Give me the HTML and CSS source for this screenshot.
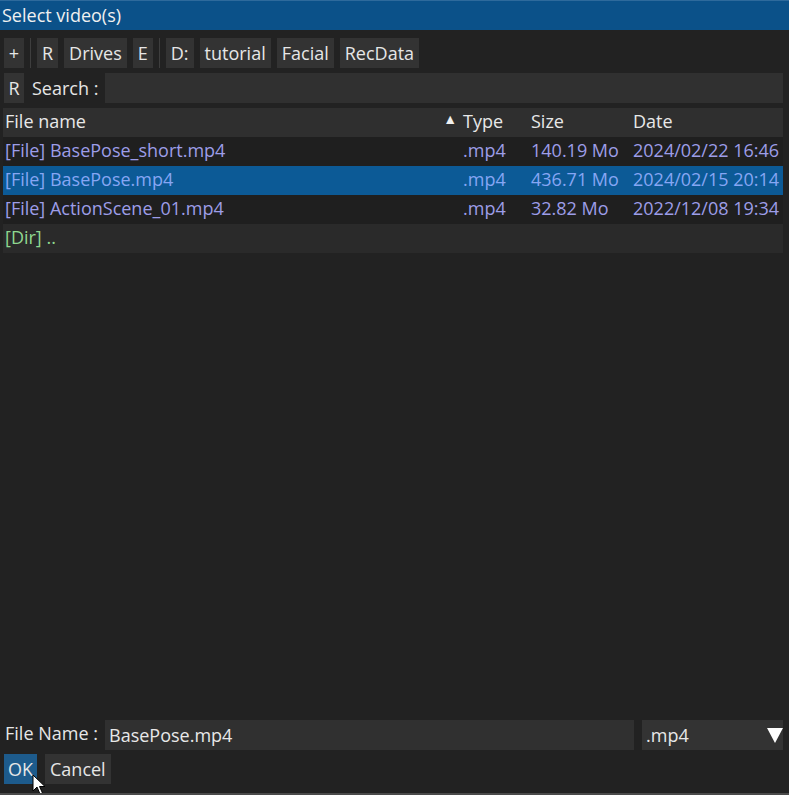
FILE: index.html
```html
<!DOCTYPE html>
<html>
<head>
<meta charset="utf-8">
<link rel="stylesheet" href="styles.css">
</head>
<body>
<div class="dialog">
  <div class="titlebar">Select video(s)</div>
  <div class="content">
    <div class="toolbar">
      <span class="btn">+</span>
      <span class="sep"></span>
      <span class="btn">R</span>
      <span class="btn">Drives</span>
      <span class="btn">E</span>
      <span class="sep"></span>
      <span class="btn">D:</span>
      <span class="btn">tutorial</span>
      <span class="btn">Facial</span>
      <span class="btn">RecData</span>
    </div>
    <div class="searchrow">
      <span class="btn">R</span>
      <span class="label">Search :</span>
      <span class="input"></span>
    </div>
    <div class="table">
      <div class="row header">
        <span class="cell name">File name<span class="sort">▲</span></span>
        <span class="cell">Type</span>
        <span class="cell">Size</span>
        <span class="cell">Date</span>
      </div>
      <div class="row file">
        <span class="cell name">[File] BasePose_short.mp4</span>
        <span class="cell">.mp4</span>
        <span class="cell">140.19 Mo</span>
        <span class="cell">2024/02/22 16:46</span>
      </div>
      <div class="row file alt selected">
        <span class="cell name">[File] BasePose.mp4</span>
        <span class="cell">.mp4</span>
        <span class="cell">436.71 Mo</span>
        <span class="cell">2024/02/15 20:14</span>
      </div>
      <div class="row file">
        <span class="cell name">[File] ActionScene_01.mp4</span>
        <span class="cell">.mp4</span>
        <span class="cell">32.82 Mo</span>
        <span class="cell">2022/12/08 19:34</span>
      </div>
      <div class="row dir alt">
        <span class="cell name">[Dir] ..</span>
        <span class="cell"></span>
        <span class="cell"></span>
        <span class="cell"></span>
      </div>
    </div>
    <div class="spacer"></div>
    <div class="filerow">
      <span class="label">File Name :</span>
      <span class="input fname">BasePose.mp4</span>
      <span class="combo">.mp4<span class="arrow"></span></span>
    </div>
    <div class="buttons">
      <span class="btn ok">OK</span>
      <span class="btn">Cancel</span>
    </div>
  </div>
  <svg class="cursor" width="14" height="22" viewBox="0 0 14 22">
    <path d="M1 1 L1 17 L5 13 L8 20 L10.5 19 L7.5 12.5 L13 12.5 Z" fill="#ffffff" stroke="#000000" stroke-width="1"/>
  </svg>
</div>
</body>
</html>
```

FILE: styles.css
```css
html, body {
  margin: 0;
  padding: 0;
  background: #222222;
}
body {
  font-family: "Open Sans", "Noto Sans", sans-serif;
  font-size: 18px;
  color: #e8e8e8;
}
.dialog {
  position: relative;
  width: 789px;
  height: 795px;
  display: flex;
  flex-direction: column;
  overflow: hidden;
  box-sizing: border-box;
  border-bottom: 2px solid #4a4a4a;
}
.titlebar {
  height: 30px;
  line-height: 29px;
  background: #0b5189;
  border-top: 1px solid #2e6a9c;
  box-sizing: border-box;
  padding-left: 2px;
  color: #f0f0f0;
  flex: none;
}
.content {
  flex: 1;
  display: flex;
  flex-direction: column;
  padding: 8px 6px 9px 4px;
}
.btn {
  display: inline-flex;
  align-items: center;
  justify-content: center;
  height: 30px;
  padding: 0 5px;
  background: #333333;
  color: #e6e6e6;
  box-sizing: border-box;
}
.toolbar {
  display: flex;
  align-items: center;
  gap: 6px;
  height: 30px;
}
.toolbar .btn:first-child {
  width: 20px;
}
.sep {
  width: 1px;
  height: 30px;
  background: #3e3e3e;
}
.searchrow {
  display: flex;
  align-items: center;
  margin-top: 5px;
  height: 30px;
}
.searchrow .btn {
  width: 20px;
}
.label {
  color: #e6e6e6;
  box-sizing: border-box;
  flex: none;
}
.searchrow .label {
  width: 81px;
  padding-left: 8px;
}
.input {
  flex: 1;
  height: 30px;
  background: #303030;
  display: flex;
  align-items: center;
  padding-left: 4px;
  box-sizing: border-box;
}
.table {
  margin-top: 5px;
  margin-left: -1px;
  display: flex;
  flex-direction: column;
}
.row {
  display: grid;
  grid-template-columns: 457px 68px 102px 1fr;
  height: 29px;
  align-items: center;
  background: #1f1f1f;
}
.row.header {
  background: #2f2f2f;
  color: #e8e8e8;
}
.row.alt {
  background: #2a2a2a;
}
.cell {
  padding-left: 3px;
  white-space: nowrap;
  overflow: hidden;
  line-height: 27px;
  height: 29px;
}
.cell.name {
  position: relative;
  padding-left: 2px;
}
.sort {
  position: absolute;
  right: 3px;
  top: -3px;
  font-size: 14px;
  color: #f0f0f0;
}
.row.file {
  color: #9d9de8;
}
.row.selected {
  background: #0c5a96;
  color: #86a6f4;
}
.row.dir {
  color: #8fd88f;
}
.spacer {
  flex: 1;
}
.filerow {
  display: flex;
  align-items: center;
  height: 30px;
}
.filerow .label {
  width: 101px;
  padding-left: 1px;
  position: relative;
  top: -2px;
}
.fname {
  flex: none;
  width: 529px;
  color: #e8e8e8;
}
.combo {
  margin-left: 8px;
  flex: 1;
  height: 30px;
  background: #333333;
  display: flex;
  align-items: center;
  justify-content: space-between;
  padding-left: 4px;
  box-sizing: border-box;
}
.arrow {
  width: 0;
  height: 0;
  border-left: 8px solid transparent;
  border-right: 8px solid transparent;
  border-top: 15px solid #ffffff;
}
.buttons {
  display: flex;
  gap: 8px;
  margin-top: 4px;
  height: 30px;
}
.btn.ok {
  background: #1d5b8c;
  width: 33px;
}
.cursor {
  position: absolute;
  left: 32px;
  top: 774px;
}
```
